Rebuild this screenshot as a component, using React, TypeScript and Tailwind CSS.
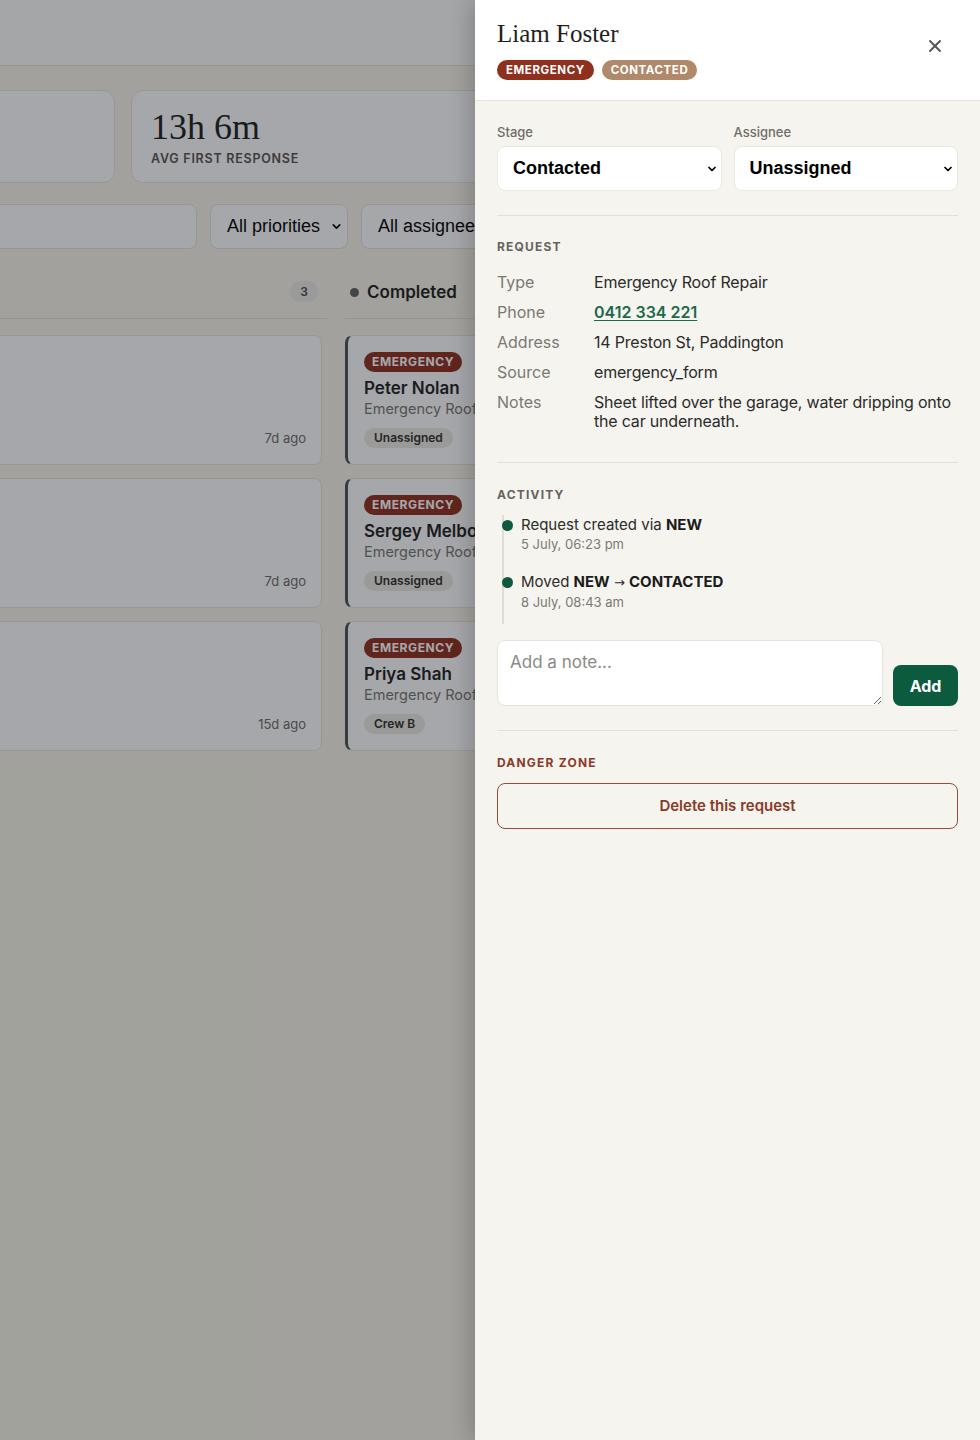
import { ChevronDown, X } from "lucide-react";

const serif = { fontFamily: '"Liberation Serif", "DejaVu Serif", serif' };
const native = { fontFamily: '"Liberation Sans", Arial, sans-serif' };

const leftCards = [{ ago: "7d ago" }, { ago: "7d ago" }, { ago: "15d ago" }];

const doneCards = [
  { name: "Peter Nolan", who: "Unassigned" },
  { name: "Sergey Melbourne", who: "Unassigned" },
  { name: "Priya Shah", who: "Crew B" },
];

const details = [
  { label: "Type", value: "Emergency Roof Repair" },
  { label: "Phone", value: "0412 334 221", link: true },
  { label: "Address", value: "14 Preston St, Paddington" },
  { label: "Source", value: "emergency_form" },
  { label: "Notes", value: "Sheet lifted over the garage, water dripping onto the car underneath." },
];

const Board = () => {
  return (
    <div className="min-h-[1440px] overflow-hidden bg-[#f9f6ea]">
      <header className="h-[66px] border-b border-[#e6e3d8] bg-[#fdfdfb]"></header>

      <div className="mt-6 flex w-[1400px] -ml-[245px] gap-4">
        <div className="h-[93px] w-[360px] rounded-xl border border-[#e9e6dc] bg-white"></div>
        <div className="h-[93px] w-[360px] rounded-xl border border-[#e9e6dc] bg-white px-[19px] pt-[17px]">
          <p className="text-[36px] leading-[38px] text-[#1d1d1b]" style={serif}>
            13h 6m
          </p>
          <p className="mt-[4px] text-[12.5px] font-semibold tracking-[0.06em] text-[#55534f]">
            AVG FIRST RESPONSE
          </p>
        </div>
      </div>

      <div className="mt-[21px] flex w-[1400px] -ml-[245px] gap-[13px]" style={native}>
        <div className="h-[45px] w-[442px] rounded-lg border border-[#e6e3da] bg-white"></div>
        <div className="flex h-[45px] w-[138px] items-center justify-between rounded-lg border border-[#e6e3da] bg-white pl-[16px] pr-[4px] text-[18px] text-black">
          All priorities
          <ChevronDown size={13} strokeWidth={3} />
        </div>
        <div className="flex h-[45px] w-[160px] items-center justify-between rounded-lg border border-[#e6e3da] bg-white pl-[16px] pr-[4px] text-[18px] text-black">
          All assignees
          <ChevronDown size={13} strokeWidth={3} />
        </div>
      </div>

      <div className="mt-[32px] flex w-[1400px] -ml-[13px] gap-[18px]">
        <div className="w-[340px]">
          <div className="flex h-[38px] items-start justify-end border-b border-[#e3e0d5] pr-[9px]">
            <span className="flex h-[21px] w-[28px] items-center justify-center rounded-full bg-[#ecebe6] text-[12px] font-semibold text-[#4a4a48]">
              3
            </span>
          </div>
          <div className="flex flex-col gap-[13px] pr-[5px] pt-4">
            {leftCards.map((c, i) => (
              <div
                key={i}
                className="flex h-[130px] items-end justify-end rounded-lg border border-[#e8e5dc] bg-white px-[15px] pb-[16px] text-[13px] text-[#6b6b69]"
              >
                {c.ago}
              </div>
            ))}
          </div>
        </div>
        <div className="w-[340px]">
          <div className="flex h-[38px] items-start gap-[8px] border-b border-[#e3e0d5] pl-[5px]">
            <span className="mt-[7px] h-[9px] w-[9px] rounded-full bg-[#5f6063]"></span>
            <span className="text-[17px] font-semibold leading-[22px] text-[#1d1d1b]">Completed</span>
          </div>
          <div className="flex flex-col gap-[13px] pt-4">
            {doneCards.map((c) => (
              <div
                key={c.name}
                className="h-[130px] rounded-lg border border-l-[3px] border-[#e8e5dc] border-l-[#4f5052] bg-white pl-[16px] pt-[12px]"
              >
                <span className="inline-block rounded-full bg-[#8f2f1e] px-[8px] py-[2px] text-[12px] font-bold leading-[16px] tracking-[0.05em] text-white">
                  EMERGENCY
                </span>
                <p className="mt-[6px] text-[17px] font-semibold leading-[21px] text-[#1d1d1b]">{c.name}</p>
                <p className="text-[14.5px] leading-[20px] text-[#77756f]">Emergency Roof Repair</p>
                <span className="mt-[9px] inline-block rounded-full bg-[#eceae2] px-[10px] py-[2px] text-[12px] font-semibold leading-[16px] text-[#2c2c2a]">
                  {c.who}
                </span>
              </div>
            ))}
          </div>
        </div>
      </div>
    </div>
  );
};

const Drawer = () => {
  return (
    <aside className="absolute right-0 top-0 h-full w-[505px] bg-[#f5f4ef] shadow-[-6px_0_20px_rgba(0,0,0,0.18)]">
      <div className="flex items-start justify-between border-b border-[#e7e4dc] bg-white pb-[20px] pl-[22px] pr-[29px] pt-[19px]">
        <div>
          <h2 className="text-[25px] leading-[30px] text-[#1f1f1d]" style={serif}>
            Liam Foster
          </h2>
          <div className="mt-[11px] flex gap-[8px]">
            <span className="rounded-full bg-[#8f2f1e] px-[9px] py-[2px] text-[11.5px] font-bold leading-[16px] tracking-[0.05em] text-white">
              EMERGENCY
            </span>
            <span className="rounded-full bg-[#b0896a] px-[9px] py-[2px] text-[11.5px] font-bold leading-[16px] tracking-[0.05em] text-white">
              CONTACTED
            </span>
          </div>
        </div>
        <button className="mt-[11px] flex h-8 w-8 items-center justify-center text-[#555555]">
          <X size={20} strokeWidth={2.25} />
        </button>
      </div>

      <div className="px-[22px]">
        <div className="grid grid-cols-2 gap-[12px] pb-[24px] pt-[23px]">
          {[
            { label: "Stage", value: "Contacted" },
            { label: "Assignee", value: "Unassigned" },
          ].map((s) => (
            <div key={s.label}>
              <p className="mb-[6px] text-[13px] font-medium leading-[16px] text-[#6f6d68]">{s.label}</p>
              <div
                className="flex h-[45px] items-center justify-between rounded-lg border border-[#ebe8e1] bg-white pl-[15px] pr-[3px] text-[18px] font-bold text-black"
                style={native}
              >
                {s.value}
                <ChevronDown size={12} strokeWidth={3.5} />
              </div>
            </div>
          ))}
        </div>

        <div className="border-t border-[#e3e0d8] pb-[31px] pt-[23px]">
          <p className="text-[12px] font-bold leading-[16px] tracking-[0.1em] text-[#66635d]">REQUEST</p>
          <div className="mt-[18px] grid grid-cols-[97px_1fr] items-start gap-y-[11px] text-[16px] leading-[19px]">
            {details.map((d) => (
              <div key={d.label} className="contents">
                <span className="text-[#7b7974]">{d.label}</span>
                {d.link ? (
                  <a className="justify-self-start font-semibold text-[#1c6a4a] underline underline-offset-2">{d.value}</a>
                ) : (
                  <span className="-mr-[8px] tracking-[-0.012em] text-[#2b2b29]">{d.value}</span>
                )}
              </div>
            ))}
          </div>
        </div>

        <div className="border-t border-[#e3e0d8] pb-[24px] pt-[24px]">
          <p className="text-[12px] font-bold leading-[16px] tracking-[0.1em] text-[#66635d]">ACTIVITY</p>
          <div className="ml-[5px] mt-[12px] border-l-2 border-[#e0ddd4] pb-[13px] pl-[17px]">
            <div className="relative">
              <span className="absolute -left-[19px] top-[5px] h-[11px] w-[11px] rounded-full bg-[#0f5a3f]"></span>
              <p className="text-[15px] leading-[20px] text-[#2b2b29]">
                Request created via <b className="font-bold text-[#1b1b1a]">NEW</b>
              </p>
              <p className="mt-[1px] text-[13px] leading-[17px] text-[#7b7974]">5 July, 06:23 pm</p>
            </div>
            <div className="relative mt-[19px]">
              <span className="absolute -left-[19px] top-[5px] h-[11px] w-[11px] rounded-full bg-[#0f5a3f]"></span>
              <p className="text-[15px] leading-[20px] text-[#2b2b29]">
                Moved <b className="font-bold text-[#1b1b1a]">NEW</b>{" "}
                <span style={{ fontFamily: '"DejaVu Sans", sans-serif' }} className="text-[13px]">→</span>{" "}
                <b className="font-bold text-[#1b1b1a]">CONTACTED</b>
              </p>
              <p className="mt-[1px] text-[13px] leading-[17px] text-[#7b7974]">8 July, 08:43 am</p>
            </div>
          </div>
          <div className="mt-[16px] flex items-end gap-[10px]">
            <textarea
              placeholder="Add a note..."
              className="h-[66px] flex-1 rounded-lg border border-[#e7e4dc] bg-white px-[12px] py-[10px] text-[17px] leading-[22px] text-[#2b2b29] placeholder:text-[#8a8985]"
            ></textarea>
            <button className="h-[41px] w-[65px] rounded-lg bg-[#0d5b3f] text-[16px] font-bold text-white">Add</button>
          </div>
        </div>

        <div className="border-t border-[#e3e0d8] pt-[24px]">
          <p className="text-[12px] font-bold leading-[16px] tracking-[0.1em] text-[#8a3a27]">DANGER ZONE</p>
          <button className="mt-[12px] h-[46px] w-full rounded-lg border-[1.5px] border-[#9a4a39] text-[15px] font-semibold text-[#8a3a27]">
            Delete this request
          </button>
        </div>
      </div>
    </aside>
  );
};

export default function App() {
  return (
    <div className="relative min-h-[1440px] w-full overflow-hidden" style={{ fontFamily: 'Inter, "Noto Sans", sans-serif' }}>
      <Board />
      <div className="absolute inset-0 bg-[rgba(20,24,32,0.38)]"></div>
      <Drawer />
    </div>
  );
}
